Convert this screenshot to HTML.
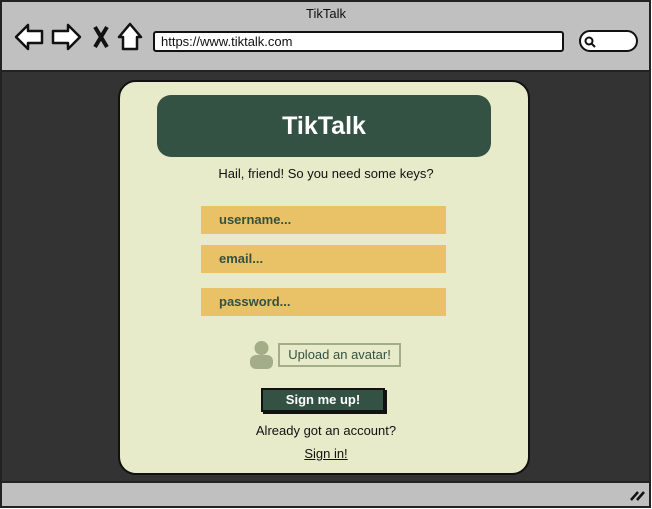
<!DOCTYPE html>
<html><head><style>
*{margin:0;padding:0;box-sizing:border-box}
body{width:652px;height:509px;background:#fff;font-family:"Liberation Sans",sans-serif;position:relative;overflow:hidden}
.frame{position:absolute;left:0;top:0;width:651px;height:508px;border:2px solid #222;background:#333}
.top{position:absolute;left:0;top:0;width:647px;height:70px;background:#c0c0c0;border-bottom:2px solid #222}
.bot{position:absolute;left:0;top:479px;width:647px;height:25px;background:#c0c0c0;border-top:2px solid #222}
.a{position:absolute}
.card{left:118px;top:80px;width:412px;height:395px;background:#e7ebc9;border:2px solid #111;border-radius:18px}
.hdr{left:157px;top:95px;width:334px;height:62px;background:#345243;border-radius:14px;color:#fff;font-weight:bold;font-size:25px;text-align:center;line-height:62px}
.in{left:201px;width:245px;height:28px;background:#e9c166;color:#345243;font-weight:bold;font-size:13px;line-height:28px;padding-left:18px}
.t{font-size:13px;color:#111;text-align:center;width:652px;left:0}
</style></head><body>
<div class="frame">
<div class="top"></div>
<div class="bot"></div>
</div>
<div class="a" style="left:0;top:6px;width:652px;text-align:center;font-size:13px;color:#111">TikTalk</div>
<svg class="a" style="left:12px;top:22px" width="135" height="30" viewBox="0 0 135 30" fill="#fff" stroke="#111" stroke-width="2.5" stroke-linejoin="round">
<path d="M4 15 L16 3 L16 9 L30 9 L30 21 L16 21 L16 27 Z"/>
<path d="M68 15 L56 3 L56 9 L41 9 L41 21 L56 21 L56 27 Z"/>
<path d="M83 5 L95 25 M95 5 L83 25" stroke-width="4"/>
<path d="M118 2 L107 15 L111 15 L111 27 L125 27 L125 15 L129 15 Z"/>
</svg>
<div class="a" style="left:153px;top:31px;width:411px;height:21px;background:#fff;border:2px solid #111;border-radius:3px;font-size:13px;line-height:17px;padding-left:6px;color:#111">https://www.tiktalk.com</div>
<div class="a" style="left:579px;top:30px;width:59px;height:22px;background:#fff;border:2px solid #111;border-radius:11px"></div>
<svg class="a" style="left:583px;top:35px" width="14" height="13"><circle cx="6" cy="6" r="3.5" fill="none" stroke="#111" stroke-width="2"/><path d="M8 8 L12 12" stroke="#111" stroke-width="2"/></svg>
<svg class="a" style="left:628px;top:488px" width="20" height="14"><path d="M3 12 L10 4 M9 12 L16 4" stroke="#111" stroke-width="2.5"/></svg>
<div class="a card"></div>
<div class="a hdr">TikTalk</div>
<div class="a t" style="top:166px;left:0">Hail, friend! So you need some keys?</div>
<div class="a in" style="top:206px">username...</div>
<div class="a in" style="top:245px">email...</div>
<div class="a in" style="top:288px">password...</div>
<svg class="a" style="left:249px;top:340px" width="25" height="30"><circle cx="12.5" cy="8" r="7" fill="#a3ad88"/><rect x="1" y="15" width="23" height="14" rx="6" fill="#a3ad88"/></svg>
<div class="a" style="left:278px;top:343px;width:123px;height:24px;border:2px solid #a3ad88;font-size:13px;color:#345243;text-align:center;line-height:20px">Upload an avatar!</div>
<div class="a" style="left:261px;top:388px;width:124px;height:24px;background:#345243;border:2px solid #111;box-shadow:2px 2px 0 #111;color:#fff;font-weight:bold;font-size:13px;text-align:center;line-height:20px">Sign me up!</div>
<div class="a t" style="top:423px">Already got an account?</div>
<div class="a t" style="top:446px;text-decoration:underline">Sign in!</div>
</body></html>
